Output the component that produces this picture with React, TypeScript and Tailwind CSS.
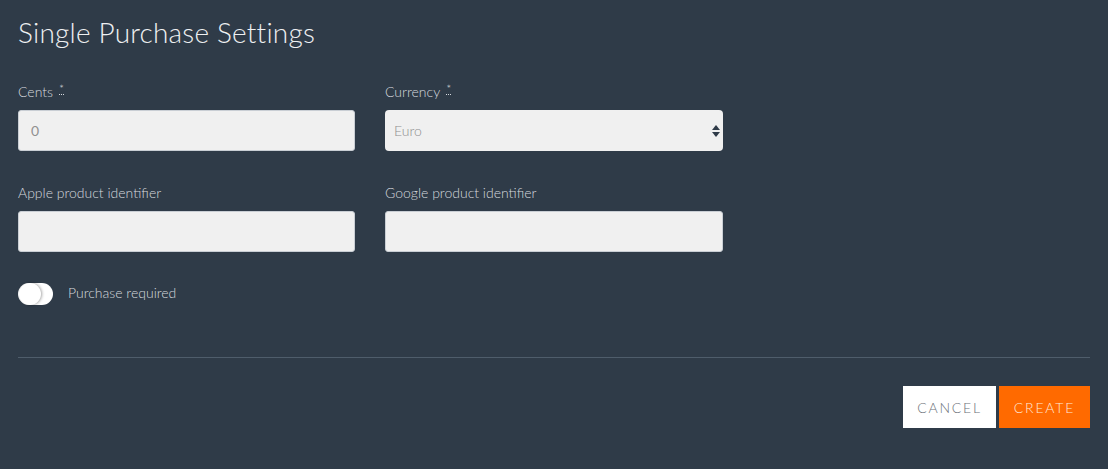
import React from "react";

const font = { fontFamily: '"Source Sans Pro", Lato, "Open Sans", sans-serif' };

function Req() {
  return (
    <abbr
      title="required"
      className="ml-[6px] text-[12px] text-[#d5d9de] no-underline border-b border-dotted border-[#d5d9de] leading-[10px] inline-block align-top mt-[2px]"
    >
      *
    </abbr>
  );
}

function Field({ label, req, children }: { label: string; req?: boolean; children: React.ReactNode }) {
  return (
    <div className="flex flex-col">
      <label className="text-[14px] text-[#d5d9de] h-[20px] pt-[2px] leading-[20px] mb-[10px] font-['Lato',sans-serif] font-light">
        {label}
        {req && <Req />}
      </label>
      {children}
    </div>
  );
}

export default function App() {
  return (
    <div className="w-[1108px] h-[469px] bg-[#2f3b48] px-[18px] pt-[14px]" style={font}>
      <h1 className="text-[28px] leading-[36px] text-[#eef0f2] font-['Lato',sans-serif] font-light tracking-[0.2px]">
        Single Purchase Settings
      </h1>
      <div className="grid grid-cols-[337px_338px] gap-x-[30px] gap-y-[30px] mt-[30px]">
        <Field label="Cents" req>
          <div className="h-[41px] rounded-[3px] bg-[#f0f0f0] border border-[#c9ced4] flex items-center px-[12px] text-[14px] text-[#909090] font-['Lato',sans-serif]">
            0
          </div>
        </Field>
        <Field label="Currency" req>
          <div className="h-[41px] rounded-[4px] bg-[#f0f0f0] flex items-center justify-between pl-[9px] pr-[3px] text-[14px] text-[#8f8f8f] font-['Lato',sans-serif] font-light">
            <span>Euro</span>
            <svg width="8" height="12" viewBox="0 0 8 12">
              <polygon points="4,0 8,5 0,5" fill="#2f3b48" />
              <polygon points="0,7 8,7 4,12" fill="#2f3b48" />
            </svg>
          </div>
        </Field>
        <Field label="Apple product identifier">
          <div className="h-[41px] rounded-[3px] bg-[#f0f0f0] border border-[#c9ced4]" />
        </Field>
        <Field label="Google product identifier">
          <div className="h-[41px] rounded-[3px] bg-[#f0f0f0] border border-[#c9ced4]" />
        </Field>
      </div>
      <div className="flex items-center mt-[31px] h-[22px]">
        <div className="relative w-[35px] h-[22px] rounded-full bg-white">
          <div className="absolute left-[1px] top-[0px] w-[22px] h-[22px] rounded-full bg-white shadow-[1px_0_3px_rgba(0,0,0,0.35)]" />
        </div>
        <span className="ml-[15px] text-[14px] leading-[20px] -mt-[3px] text-[#d5d9de] font-['Lato',sans-serif] font-light">Purchase required</span>
      </div>
      <div className="mt-[52px] h-px bg-[#4f5d6b]" />
      <div className="flex justify-end gap-[3px] mt-[28px]">
        <button className="w-[93px] h-[42px] bg-white text-[#6b7178] text-[14px] tracking-[1.8px] font-['Lato',sans-serif] font-light">
          CANCEL
        </button>
        <button className="w-[91px] h-[42px] bg-[#ff6a00] text-[#ffe9da] text-[14px] tracking-[1.8px] font-['Lato',sans-serif] font-light">
          CREATE
        </button>
      </div>
    </div>
  );
}
